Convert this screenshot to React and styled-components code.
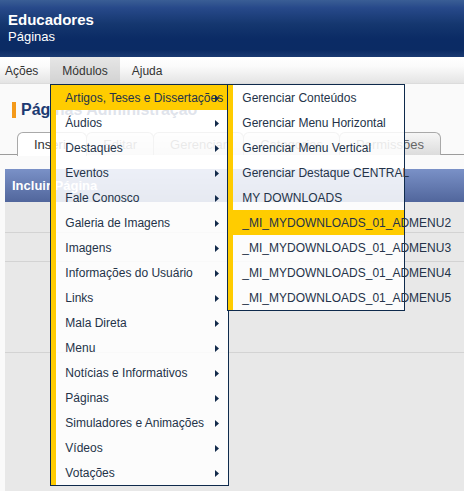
import React from "react";
import styled, { createGlobalStyle } from "styled-components";

const GlobalStyle = createGlobalStyle`
  html, body, #root { margin: 0; padding: 0; height: 100%; }
  body {
    background: #fafafa;
    font-family: "Liberation Sans", Arial, sans-serif;
    overflow: hidden;
  }
  * { box-sizing: border-box; }
`;

const Page = styled.div`
  display: flex;
  flex-direction: column;
  min-height: 100vh;
`;

const Header = styled.header`
  height: 57px;
  padding: 11px 8px 0;
  background: linear-gradient(
    to bottom,
    #3a5e95 0%,
    #27498a 14%,
    #15376f 42%,
    #0b2b65 68%,
    #0b2b64 88%,
    #1a3a72 100%
  );
  color: #fff;
`;

const Brand = styled.div`
  font-size: 15px;
  font-weight: bold;
  line-height: 17px;
`;

const SubBrand = styled.div`
  font-size: 13px;
  line-height: 16px;
  margin-top: 1px;
`;

const MenuBar = styled.nav`
  height: 27px;
  display: flex;
  background: linear-gradient(to bottom, #ffffff 0%, #fbfbfb 35%, #e4e4e4 100%);
  border-bottom: 1px solid #dcdcdc;
  position: relative;
  z-index: 5;
`;

const BarItem = styled.div`
  position: relative;
  height: 27px;
  line-height: 28px;
  padding: 0 12px;
  font-size: 12px;
  color: #333;
  background: ${(p) =>
    p.$active ? "linear-gradient(to bottom, #e6e6e6, #d2d2d2)" : "transparent"};
  &:first-child { padding-left: 5px; }
`;

const Dropdown = styled.div`
  position: absolute;
  left: 0;
  top: 27px;
  width: ${(p) => p.$width}px;
  border: 1px solid #0e2a4c;
  background: rgba(255, 255, 255, 0.86);
  line-height: normal;
`;

const SubDropdown = styled(Dropdown)`
  left: 176px;
  top: -1px;
  z-index: 2;
`;

const ItemList = styled.ul`
  list-style: none;
  margin: 0;
  padding: 0;
  border-left: 5px solid #ffcc00;
`;

const Item = styled.li`
  position: relative;
  height: 25px;
  line-height: 27px;
  padding-left: 9px;
  font-size: 12px;
  color: #243349;
  white-space: nowrap;
  background: ${(p) => (p.$hover ? "#ffcc00" : "transparent")};
`;

const Arrow = styled.svg`
  position: absolute;
  right: 9px;
  top: 10px;
`;

const TitleRow = styled.h1`
  margin: 18px 0 0 12px;
  padding-left: 5px;
  border-left: 4px solid #f49a1a;
  font-size: 16px;
  line-height: 16px;
  font-weight: bold;
  color: #1d3a72;
`;

const TabStrip = styled.div`
  display: flex;
  margin-top: 13px;
  padding-left: 17px;
  border-bottom: 1px solid #9c9c9c;
  height: 24px;
`;

const Tab = styled.div`
  height: ${(p) => (p.$active ? 24 : 23)}px;
  margin-top: 1px;
  margin-right: -1px;
  padding: 0 16px;
  line-height: 23px;
  font-size: 13px;
  color: ${(p) => (p.$active ? "#333" : "#666")};
  border: 1px solid #a9a9a9;
  border-bottom: none;
  border-radius: 6px 6px 0 0;
  background: ${(p) =>
    p.$active ? "#fff" : "linear-gradient(to bottom, #f6f6f6, #dcdcdc)"};
  position: relative;
  z-index: ${(p) => (p.$active ? 1 : 0)};
`;

const Panel = styled.section`
  margin: 14px 0 0 5px;
  flex: 1;
  display: flex;
  flex-direction: column;
  background: #e8e8e8;
`;

const PanelHeader = styled.div`
  height: 33px;
  line-height: 34px;
  padding-left: 7px;
  font-size: 13px;
  font-weight: bold;
  color: #fff;
  background: linear-gradient(to bottom, #7a91c7, #51669c);
`;

const FormRow = styled.div`
  height: ${(p) => (p.$h ? `${p.$h}px` : "auto")};
  flex: ${(p) => (p.$h ? "none" : 1)};
  border-bottom: ${(p) => (p.$h ? "1px solid #d3d3d3" : "none")};
`;

const RightArrow = () => (
  <Arrow width="4" height="7" viewBox="0 0 4 7">
    <polygon points="0,0 4,3.5 0,7" fill="#132b4b" />
  </Arrow>
);

const modules = [
  "Artigos, Teses e Dissertações",
  "Áudios",
  "Destaques",
  "Eventos",
  "Fale Conosco",
  "Galeria de Imagens",
  "Imagens",
  "Informações do Usuário",
  "Links",
  "Mala Direta",
  "Menu",
  "Notícias e Informativos",
  "Páginas",
  "Simuladores e Animações",
  "Vídeos",
  "Votações",
];

const subItems = [
  "Gerenciar Conteúdos",
  "Gerenciar Menu Horizontal",
  "Gerenciar Menu Vertical",
  "Gerenciar Destaque CENTRAL",
  "MY DOWNLOADS",
  "_MI_MYDOWNLOADS_01_ADMENU2",
  "_MI_MYDOWNLOADS_01_ADMENU3",
  "_MI_MYDOWNLOADS_01_ADMENU4",
  "_MI_MYDOWNLOADS_01_ADMENU5",
];

const tabs = ["Inserir", "Editar", "Gerenciar", "Categorias", "Permissões"];

export default function App() {
  return (
    <>
      <GlobalStyle />
      <Page>
        <Header>
          <Brand>Educadores</Brand>
          <SubBrand>Páginas</SubBrand>
        </Header>
        <MenuBar>
          <BarItem>Ações</BarItem>
          <BarItem $active>
            Módulos
            <Dropdown $width={179}>
              <ItemList>
                {modules.map((m, i) => (
                  <Item key={m} $hover={i === 0}>
                    {m}
                    <RightArrow />
                  </Item>
                ))}
              </ItemList>
              <SubDropdown $width={178}>
                <ItemList>
                  {subItems.map((s, i) => (
                    <Item key={s} $hover={i === 5}>
                      {s}
                    </Item>
                  ))}
                </ItemList>
              </SubDropdown>
            </Dropdown>
          </BarItem>
          <BarItem>Ajuda</BarItem>
        </MenuBar>
        <TitleRow>Páginas Administração</TitleRow>
        <TabStrip>
          {tabs.map((t, i) => (
            <Tab key={t} $active={i === 0}>
              {t}
            </Tab>
          ))}
        </TabStrip>
        <Panel>
          <PanelHeader>Incluir Página</PanelHeader>
          <FormRow $h={31} />
          <FormRow $h={29} />
          <FormRow $h={91} />
          <FormRow />
        </Panel>
      </Page>
    </>
  );
}
